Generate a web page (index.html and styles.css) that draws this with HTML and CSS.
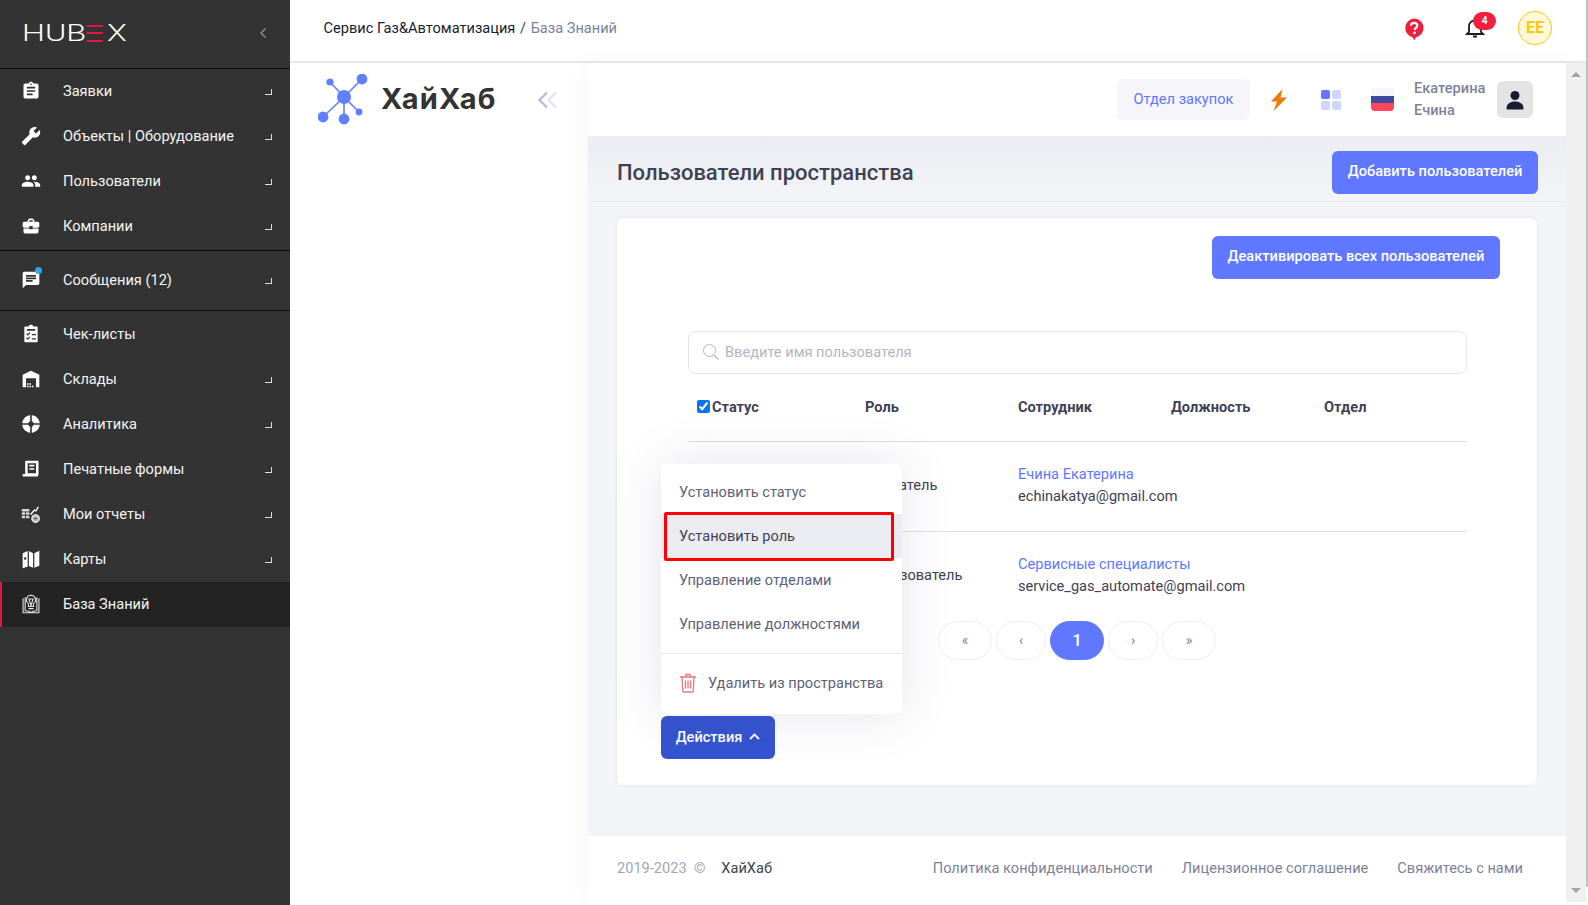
FILE: index.html
```html
<!DOCTYPE html>
<html lang="ru">
<head>
  <meta charset="UTF-8">
  <meta name="viewport" content="width=device-width, initial-scale=1.0">
  <title>Пользователи пространства</title>
  <link rel="stylesheet" href="styles.css">
</head>
<body>

<!-- Боковое меню -->
<aside class="sidebar">
  <div class="brand">
    <span class="brand-name">HUB<span class="brand-e"><i></i><i></i><i></i></span>X</span>
    <span class="brand-toggle">
      <svg width="8" height="12" viewBox="0 0 8 12"><path d="M6.5 1.5 2 6l4.5 4.5" fill="none" stroke="#8b8b8b" stroke-width="1.5"/></svg>
    </span>
  </div>

  <nav class="menu-group menu-first">
    <a class="menu-item">
      <svg class="menu-icon" viewBox="0 0 24 24"><path d="M19 3h-4.18C14.4 1.84 13.3 1 12 1c-1.3 0-2.4.84-2.82 2H5c-1.1 0-2 .9-2 2v14c0 1.1.9 2 2 2h14c1.1 0 2-.9 2-2V5c0-1.1-.9-2-2-2zm-7 0c.55 0 1 .45 1 1s-.45 1-1 1-1-.45-1-1 .45-1 1-1zm2 14H7v-2h7v2zm3-4H7v-2h10v2zm0-4H7V7h10v2z"/></svg>
      <span>Заявки</span><i class="menu-corner"></i>
    </a>
    <a class="menu-item">
      <svg class="menu-icon flip" viewBox="0 0 24 24"><path d="M22.7 19l-9.1-9.1c.9-2.3.4-5-1.5-6.9-2-2-5-2.4-7.4-1.3L9 6 6 9 1.6 4.7C.4 7.1.9 10.1 2.9 12.1c1.9 1.9 4.6 2.4 6.9 1.5l9.1 9.1c.4.4 1 .4 1.4 0l2.3-2.3c.5-.4.5-1.1.1-1.4z"/></svg>
      <span>Объекты | Оборудование</span><i class="menu-corner"></i>
    </a>
    <a class="menu-item">
      <svg class="menu-icon" viewBox="0 0 24 24"><path d="M16 11c1.66 0 2.99-1.34 2.99-3S17.66 5 16 5c-1.66 0-3 1.34-3 3s1.34 3 3 3zm-8 0c1.66 0 2.99-1.34 2.99-3S9.66 5 8 5C6.34 5 5 6.34 5 8s1.34 3 3 3zm0 2c-2.33 0-7 1.17-7 3.5V19h14v-2.5c0-2.33-4.67-3.5-7-3.5zm8 0c-.29 0-.62.02-.97.05 1.16.84 1.97 1.97 1.97 3.45V19h6v-2.5c0-2.33-4.67-3.5-7-3.5z"/></svg>
      <span>Пользователи</span><i class="menu-corner"></i>
    </a>
    <a class="menu-item">
      <svg class="menu-icon" viewBox="0 0 24 24"><path d="M10 16v-1H3.01L3 19c0 1.11.89 2 2 2h14c1.11 0 2-.89 2-2v-4h-7v1h-4zm10-9h-4.01V5l-2-2h-4l-2 2v2H4c-1.1 0-2 .9-2 2v3c0 1.11.89 2 2 2h6v-2h4v2h6c1.1 0 2-.9 2-2V9c0-1.1-.9-2-2-2zm-6 0h-4V5h4v2z"/></svg>
      <span>Компании</span><i class="menu-corner"></i>
    </a>
  </nav>

  <nav class="menu-group menu-messages">
    <a class="menu-item">
      <span class="icon-wrap">
        <svg class="menu-icon" viewBox="0 0 24 24"><path d="M20 2H4c-1.1 0-1.99.9-1.99 2L2 22l4-4h14c1.1 0 2-.9 2-2V4c0-1.1-.9-2-2-2zM6 9h12v2H6V9zm8 5H6v-2h8v2zm4-6H6V6h12v2z"/></svg>
        <i class="icon-dot"></i>
      </span>
      <span>Сообщения (12)</span><i class="menu-corner"></i>
    </a>
  </nav>

  <nav class="menu-group menu-last">
    <a class="menu-item">
      <svg class="menu-icon" viewBox="0 0 24 24"><path fill-rule="evenodd" d="M5 3h4c.4-1.2 1.6-2 3-2s2.600.8 3 2h4c.6 0 1 .4 1 1v17c0 .6-.4 1-1 1H5c-.6 0-1-.4-1-1V4c0-.6.4-1 1-1zm2 3v2h10V6H7zm.2 5-1 1 2 2 3-3-1-1-2 2-1-1zm0 5-1 1 2 2 3-3-1-1-2 2-1-1zM13 12v1.600h5V12h-5zm0 5v1.600h5V17h-5z"/></svg>
      <span>Чек-листы</span>
    </a>
    <a class="menu-item">
      <svg class="menu-icon" viewBox="0 0 24 24"><path fill-rule="evenodd" d="M12 2 2 7v15h4V11h12v11h4V7L12 2zM7 17h2v2H7v-2zm3 0h2v2h-2v-2zm-3 3h2v2H7v-2zm3 0h2v2h-2v-2zm3 0h2v2h-2v-2z"/></svg>
      <span>Склады</span><i class="menu-corner"></i>
    </a>
    <a class="menu-item">
      <svg class="menu-icon" viewBox="0 0 24 24"><path d="M11 1.500v7.200A3.500 3.500 0 0 0 8.700 11H1.500C2 5.900 5.900 2 11 1.500zM13 1.500c5.100.5 9 4.400 9.500 9.500h-7.200A3.500 3.500 0 0 0 13 8.700V1.500zM1.500 13h7.200a3.500 3.500 0 0 0 2.300 2.300v7.200C5.900 22 2 18.100 1.500 13zM15.300 13h7.200c-.5 5.100-4.400 9-9.500 9.500v-7.200a3.500 3.500 0 0 0 2.300-2.300z"/></svg>
      <span>Аналитика</span><i class="menu-corner"></i>
    </a>
    <a class="menu-item">
      <svg class="menu-icon" viewBox="0 0 24 24"><path fill-rule="evenodd" d="M6 2h15v16c0 1.100-.4 2-1 3H3c-.8 0-1-.6-1-1v-2h3V3c0-.6.4-1 1-1zm2 3v12h10V5H8zm2 2h6v2h-6V7zm0 4h6v2h-6v-2z"/></svg>
      <span>Печатные формы</span><i class="menu-corner"></i>
    </a>
    <a class="menu-item">
      <svg class="menu-icon" viewBox="0 0 24 24"><path fill="#d8d8d8" d="M1 6h9v3H1V6zm0 4h4v3H1v-3zm5 0h4v3H6v-3zm-5 4h4v3H1v-3zm5 0h4v3H6v-3z"/><path d="M11 12l5-6 1.500 1.500L20 3l1.500 1-3.500 5.500-1.500-1.500-4.500 5.500-1-1.500z"/><circle cx="17.500" cy="17.500" r="4.500" fill="#bbb" stroke="#fff" stroke-width="1.300"/><path d="M15.500 17.500h4" stroke="#333" stroke-width="1.300"/></svg>
      <span>Мои отчеты</span><i class="menu-corner"></i>
    </a>
    <a class="menu-item">
      <svg class="menu-icon" viewBox="0 0 24 24"><path fill-rule="evenodd" d="M2 5l6-2.500V21l-6 2V5zm3 5a1.500 1.500 0 1 0 0 3 1.500 1.500 0 0 0 0-3zM9.500 2.500l5 2.500v17.500l-5-2V2.500zM16 5l6-3v18l-6 2.500V5z"/></svg>
      <span>Карты</span><i class="menu-corner"></i>
    </a>
    <a class="menu-item active">
      <svg class="menu-icon" viewBox="0 0 24 24"><g fill="none" stroke="#e4e4e4" stroke-width="1.300"><path d="M2.500 5v17.500h19V5M5 4v16c3 0 5 .5 7 2 2-1.500 4-2 7-2V4"/><path d="M12 1.500a5.500 5.500 0 0 0-3 10.100V15h6v-3.400a5.500 5.500 0 0 0-3-10.100z"/><path d="M9.500 6h5L12 14zM9 17.500h6"/></g></svg>
      <span>База Знаний</span>
    </a>
  </nav>
</aside>

<div class="page">
  <!-- Верхняя панель -->
  <header class="topbar">
    <div class="crumbs">Сервис Газ&amp;Автоматизация <span class="crumb-sep">/</span> <span class="crumb-current">База Знаний</span></div>
    <div class="top-actions">
      <svg class="help-icon" width="22" height="24" viewBox="0 0 22 24">
        <path d="M11 1.500a9.500 9.500 0 0 1 2 18.800l-1.500 3-2-3.100A9.500 9.500 0 0 1 11 1.500z" fill="#ef1f3e"/>
        <path d="M7.800 8.700C8 6.800 9.300 5.800 11.100 5.800c1.900 0 3.200 1.100 3.200 2.700 0 2.400-2.600 2.400-2.600 4.400" fill="none" stroke="#fff" stroke-width="2.200"/>
        <circle cx="11.500" cy="15.800" r="1.400" fill="#fff"/>
      </svg>
      <span class="bell">
        <svg width="20" height="22" viewBox="0 0 20 22"><path d="M4 15V9.500C4 6 6.500 3.500 10 3.500s6 2.500 6 6V15l2 2H2l2-2z" fill="none" stroke="#1c1c28" stroke-width="1.800"/><path d="M8 19.500h4" stroke="#1c1c28" stroke-width="2"/></svg>
        <b class="bell-badge">4</b>
      </span>
      <span class="user-badge">EE</span>
    </div>
  </header>

  <div class="workspace">
    <!-- Панель пространства -->
    <section class="space-panel">
      <div class="space-logo">
        <svg width="52" height="54" viewBox="0 0 52 54">
          <g stroke="#5f7fff" stroke-width="1.600">
            <path d="M26 23 44 5M26 23 12 8M26 23 5 43M26 23v22M26 23l15 15"/>
          </g>
          <g fill="#5f7fff">
            <circle cx="26" cy="23" r="7"/>
            <circle cx="44" cy="5" r="5.400"/>
            <circle cx="12" cy="8" r="3.600"/>
            <circle cx="5" cy="43" r="5.400"/>
            <circle cx="26" cy="45" r="5.400"/>
            <circle cx="41" cy="38" r="3.400"/>
          </g>
        </svg>
        <span class="space-name">ХайХаб</span>
        <svg class="space-toggle" width="21" height="18" viewBox="0 0 21 18">
          <path d="M19 1.500 11.500 9l7.500 7.500" fill="none" stroke="#e3e5f0" stroke-width="2.400"/>
          <path d="M10 1.500 2.500 9l7.500 7.500" fill="none" stroke="#b8bdd6" stroke-width="2.400"/>
        </svg>
      </div>
    </section>

    <main class="main">
      <div class="main-head">
        <span class="dept">Отдел закупок</span>
        <svg class="bolt" width="18" height="22" viewBox="0 0 18 22"><path d="M12.500 0 1 12.500h6L3.500 22 17 8.500h-6.500L12.500 0z" fill="#f07a05"/></svg>
        <span class="tiles"><i class="tile-on"></i><i></i><i></i><i></i></span>
        <span class="flag"><i class="flag-white"></i><i class="flag-blue"></i><i class="flag-red"></i></span>
        <span class="user-name">Екатерина<br>Ечина</span>
        <span class="user-box">
          <svg width="20" height="20" viewBox="0 0 20 20"><circle cx="10" cy="5.500" r="4.500" fill="#181c32"/><path d="M1.500 18.500c0-5 4-7 8.500-7s8.500 2 8.500 7c0 .5-.5 1-1 1h-15c-.5 0-1-.5-1-1z" fill="#181c32"/></svg>
        </span>
      </div>

      <div class="title-bar">
        <h1 class="page-title">Пользователи пространства</h1>
        <button class="btn-primary btn-add">Добавить пользователей</button>
      </div>

      <div class="content">
        <div class="card">
          <div class="card-top">
            <button class="btn-primary btn-deactivate">Деактивировать всех пользователей</button>
          </div>

          <div class="table-area">
            <div class="search">
              <svg width="18" height="18" viewBox="0 0 18 18"><circle cx="7.500" cy="7.500" r="6" fill="none" stroke="#b5b5c3" stroke-width="1"/><path d="m12 12 4.500 4.500" stroke="#b5b5c3" stroke-width="1.200"/></svg>
              <span>Введите имя пользователя</span>
            </div>

            <div class="row row-head">
              <div class="cell-status"><input type="checkbox" class="check" checked>Статус</div>
              <div>Роль</div>
              <div>Сотрудник</div>
              <div>Должность</div>
              <div>Отдел</div>
            </div>

            <div class="row row-user">
              <div></div>
              <div>Создатель</div>
              <div><a class="user-link">Ечина Екатерина</a><br>echinakatya@gmail.com</div>
              <div></div>
              <div></div>
            </div>

            <div class="row row-user row-last">
              <div></div>
              <div>Пользователь</div>
              <div><a class="user-link">Сервисные специалисты</a><br>service_gas_automate@gmail.com</div>
              <div></div>
              <div></div>
            </div>
          </div>

          <div class="pager">
            <a class="page-btn btn-wide">«</a>
            <a class="page-btn">‹</a>
            <a class="page-btn current">1</a>
            <a class="page-btn">›</a>
            <a class="page-btn btn-wide">»</a>
          </div>

          <div class="actions">
            <div class="actions-menu">
              <a class="actions-item">Установить статус</a>
              <a class="actions-item selected">Установить роль</a>
              <a class="actions-item">Управление отделами</a>
              <a class="actions-item">Управление должностями</a>
              <div class="actions-line"></div>
              <a class="actions-item item-delete">
                <svg width="18" height="20" viewBox="0 0 18 20"><g fill="none" stroke="#f1747f" stroke-width="1.300"><path d="M1 4h16M6.500 3.500 7 1.500h4l.5 2M3 4l.8 14c0 .6.500 1 1 1h8.400c.5 0 1-.4 1-1L15 4"/><path d="M6.500 7.500v8M9 7.500v8M11.500 7.500v8"/></g></svg>
                Удалить из пространства
              </a>
              <div class="mark-red"></div>
            </div>
            <button class="btn-actions">Действия
              <svg width="11" height="7" viewBox="0 0 11 7"><path d="M1 6 5.500 1.500 10 6" fill="none" stroke="#fff" stroke-width="1.800"/></svg>
            </button>
          </div>
        </div>
      </div>

      <footer class="footer">
        <span class="copy">2019-2023 &nbsp;©</span>
        <span class="copy-name">ХайХаб</span>
        <span class="footer-links">
          <a>Политика конфиденциальности</a>
          <a>Лицензионное соглашение</a>
          <a>Свяжитесь с нами</a>
        </span>
      </footer>
    </main>

    <div class="scroll">
      <i class="arrow-up"></i>
      <i class="arrow-down"></i>
    </div>
  </div>
</div>

<div class="edge"></div>

</body>
</html>
```

FILE: styles.css
```css
/* Общие стили */
* {
  box-sizing: border-box;
}
html, body {
  height: 905px;
  overflow: hidden;
}
body {
  margin: 0;
  display: flex;
  font-family: Roboto, "Liberation Sans", sans-serif;
  font-size: 14.6px;
  color: #3f4254;
  background: #fff;
}
button {
  font-family: inherit;
  border: none;
  white-space: nowrap;
}

/* Боковое меню */
.sidebar {
  width: 290px;
  flex: none;
  background: #333;
  color: #fff;
}
.brand {
  height: 69px;
  display: flex;
  align-items: center;
  justify-content: space-between;
  padding: 0 23px 2px 22px;
  border-bottom: 1px solid #0d0d0d;
}
.brand-name {
  display: flex;
  align-items: center;
  font-size: 24px;
  font-weight: 300;
  transform-origin: left center;
  transform: scaleX(1.35);
}
.brand-e {
  display: flex;
  flex-direction: column;
  justify-content: space-between;
  width: 12px;
  height: 17px;
  margin-right: 3.5px;
}
.brand-e i {
  height: 2px;
  background: #e5173f;
}
.brand-toggle {
  display: flex;
}
.menu-group {
  border-bottom: 1px solid #0d0d0d;
}
.menu-first {
  padding-bottom: 1px;
}
.menu-messages {
  padding: 7px 0;
}
.menu-last {
  border-bottom: none;
  padding-top: 1px;
}
.menu-item {
  position: relative;
  height: 45px;
  display: flex;
  align-items: center;
  padding: 0 0 2px 21px;
  color: #f4f4f4;
  border-left: 0 solid #e5173f;
}
.menu-icon {
  width: 20px;
  height: 20px;
  margin-right: 22px;
  fill: #fff;
  flex: none;
}
.flip {
  transform: scaleX(-1);
}
.menu-corner {
  position: absolute;
  left: 265px;
  top: 20px;
  width: 7px;
  height: 6px;
  border-right: 1.500px solid #ddd;
  border-bottom: 1.500px solid #ddd;
}
.icon-wrap {
  position: relative;
  display: flex;
}
.icon-dot {
  position: absolute;
  left: 14px;
  top: -3px;
  width: 7px;
  height: 7px;
  border-radius: 50%;
  background: #2ea8ec;
}
.menu-item.active {
  background: #232323;
  border-left-width: 2px;
  padding-left: 19px;
}

/* Правая часть */
.page {
  width: 1296px;
  flex: none;
  display: flex;
  flex-direction: column;
}
.topbar {
  height: 63px;
  flex: none;
  display: flex;
  align-items: center;
  justify-content: space-between;
  padding: 0 34px 6px 33.500px;
  border-bottom: 2px solid #e8e8ea;
}
.crumbs {
  color: #181c32;
}
.crumb-sep {
  margin: 0 1px;
  color: #3f4254;
}
.crumb-current {
  color: #7e8299;
}
.top-actions {
  display: flex;
  align-items: center;
}
.help-icon {
  margin-top: 2px;
}
.bell {
  position: relative;
  display: flex;
  margin-left: 40px;
}
.bell-badge {
  position: absolute;
  left: 8px;
  top: -5px;
  width: 23px;
  height: 18px;
  border-radius: 9px;
  background: #ef1f3e;
  color: #fff;
  font-size: 10px;
  font-weight: 700;
  line-height: 17px;
  text-align: center;
}
.user-badge {
  width: 34px;
  height: 34px;
  margin-left: 33px;
  border: 1px solid #ffc800;
  border-radius: 50%;
  background: #fff8dd;
  color: #ffc800;
  font-size: 16px;
  font-weight: 700;
  line-height: 32px;
  text-align: center;
}

.workspace {
  flex: 1;
  min-height: 0;
  display: flex;
}
.space-panel {
  width: 298px;
  flex: none;
  background: #fff;
}
.space-logo {
  display: flex;
  align-items: center;
  padding: 11px 0 0 28px;
}
.space-name {
  margin: 0 0 5px 11px;
  font-family: Inter, "Open Sans", sans-serif;
  font-size: 29px;
  font-weight: 700;
  letter-spacing: 1.100px;
  color: #333;
}
.space-toggle {
  margin: 0 0 2px 40px;
}

.main {
  width: 978px;
  flex: none;
  display: flex;
  flex-direction: column;
  background: #f3f4f8;
  box-shadow: 0 0 20px rgba(82, 63, 105, 0.06);
}
.main-head {
  height: 73px;
  flex: none;
  display: flex;
  align-items: center;
  padding: 0 0 0 529px;
  background: #fff;
}
.dept {
  width: 133px;
  height: 41px;
  border-radius: 6px;
  background: #f5f5fa;
  color: #5f78ff;
  line-height: 41px;
  text-align: center;
}
.bolt {
  margin-left: 20px;
}
.tiles {
  display: grid;
  grid-template-columns: 9px 9px;
  gap: 2px;
  margin-left: 33px;
}
.tiles i {
  height: 9px;
  border-radius: 2px;
  background: #cfd6fd;
}
.tiles i.tile-on {
  background: #5f78ff;
}
.flag {
  display: flex;
  flex-direction: column;
  width: 23px;
  height: 23px;
  margin-left: 30px;
  border-radius: 4px;
  overflow: hidden;
}
.flag i {
  flex: 1;
}
.flag-white {
  background: #f5f5fa;
}
.flag-blue {
  background: #3f4a9e;
}
.flag-red {
  background: #ff4757;
}
.user-name {
  width: 83px;
  margin: -2px 0 0 20px;
  color: #7e8299;
  font-weight: 500;
  line-height: 22px;
}
.user-box {
  width: 36px;
  height: 37px;
  display: flex;
  align-items: center;
  justify-content: center;
  border-radius: 6px;
  background: #e4e4e4;
}

.title-bar {
  height: 66px;
  flex: none;
  display: flex;
  align-items: center;
  justify-content: space-between;
  padding: 0 28px 0 29px;
  border-bottom: 1px solid #e9eaf0;
  background: linear-gradient(#ecedf2, #f4f5f9);
}
.page-title {
  margin: 7px 0 0;
  font-size: 22px;
  font-weight: 500;
  color: #3f4254;
}
.btn-primary {
  height: 43px;
  padding: 0 0 2px;
  border-radius: 6px;
  background: #5f78ff;
  color: #fff;
  font-size: 14.6px;
  font-weight: 500;
}
.btn-add {
  width: 206px;
  margin-top: 7px;
}
.btn-deactivate {
  width: 288px;
  padding-bottom: 4px;
}

.content {
  flex: 1;
  padding: 16px 29px 0;
}
.card {
  width: 920px;
  height: 567px;
  padding-top: 18px;
  border-radius: 6px;
  background: #fff;
  box-shadow: 0 0 3px rgba(82, 63, 105, 0.12);
}
.card-top {
  display: flex;
  justify-content: flex-end;
  padding-right: 37px;
}
.table-area {
  margin: 52px 70px 0 71px;
}
.search {
  height: 43px;
  display: flex;
  align-items: center;
  gap: 5px;
  padding: 0 0 2px 13px;
  border: 1px solid #e4e4ef;
  border-radius: 8px;
  color: #b5b5c3;
}
.row {
  display: grid;
  grid-template-columns: 168px repeat(4, 153px);
  padding-left: 9px;
  white-space: nowrap;
}
.row-head {
  height: 68px;
  align-items: center;
  border-bottom: 1px solid #dddde3;
  color: #3f4254;
  font-weight: 700;
}
.row-head > div {
  padding-bottom: 2px;
}
.cell-status {
  display: flex;
  align-items: center;
}
.check {
  width: 13px;
  height: 13px;
  margin: 0 2px 0 0;
  accent-color: #0b75f0;
}
.row-user {
  height: 90px;
  padding-bottom: 2px;
  align-items: center;
  border-bottom: 1px solid #e0e0e6;
  line-height: 21.5px;
}
.row-last {
  height: 89px;
  border-bottom: none;
}
.user-link {
  color: #5f78ff;
}

.pager {
  display: flex;
  justify-content: center;
  gap: 4px;
}
.page-btn {
  width: 50px;
  height: 39px;
  border: 1px solid #eeeef5;
  border-radius: 20px;
  color: #7e8299;
  font-size: 14px;
  line-height: 37px;
  text-align: center;
}
.btn-wide {
  width: 54px;
}
.page-btn.current {
  width: 54px;
  border-color: #5f78ff;
  background: #5f78ff;
  color: #fff;
  font-size: 17px;
  font-weight: 500;
}

/* Меню действий */
.actions {
  position: relative;
  margin: 56px 0 0 44px;
  width: 114px;
}
.btn-actions {
  width: 114px;
  height: 43px;
  display: flex;
  align-items: center;
  justify-content: center;
  gap: 7px;
  padding: 0 0 2px;
  border-radius: 6px;
  background: #3454d1;
  color: #fff;
  font-size: 14.6px;
  font-weight: 500;
}
.actions-menu {
  position: absolute;
  left: 0;
  bottom: 45px;
  width: 241px;
  height: 250px;
  padding-top: 6px;
  border-radius: 6px;
  background: #fff;
  box-shadow: 0 0 50px rgba(82, 63, 105, 0.15);
}
.actions-item {
  height: 44px;
  display: flex;
  align-items: center;
  padding-left: 18px;
  color: #5e6278;
}
.actions-item.selected {
  background: #ebecf2;
  color: #3f4254;
}
.actions-line {
  height: 1px;
  margin-top: 7px;
  background: #e9e9ee;
}
.item-delete {
  gap: 11px;
  margin-top: 7px;
}
.mark-red {
  position: absolute;
  left: 3px;
  top: 48px;
  width: 230px;
  height: 49px;
  border: 3px solid #f00;
  border-radius: 2px;
}

/* Подвал */
.footer {
  height: 69px;
  flex: none;
  display: flex;
  align-items: center;
  padding: 0 0 6px 29px;
  background: #fff;
  color: #a1a5b7;
}
.copy-name {
  margin-left: 16px;
  color: #3f4254;
}
.footer-links {
  display: flex;
  gap: 29px;
  margin-left: auto;
  padding-right: 43px;
  color: #7e8299;
}

/* Полоса прокрутки */
.scroll {
  width: 20px;
  flex: none;
  height: 839px;
  position: relative;
  background: #f0f0f0;
}
.arrow-up, .arrow-down {
  position: absolute;
  left: 5px;
  border-left: 5px solid transparent;
  border-right: 5px solid transparent;
}
.arrow-up {
  top: 9px;
  border-bottom: 5px solid #a3a3a3;
}
.arrow-down {
  bottom: 9px;
  border-top: 5px solid #a3a3a3;
}
.edge {
  width: 2px;
  height: 887px;
  flex: none;
  background: #c1c1c1;
}
```
